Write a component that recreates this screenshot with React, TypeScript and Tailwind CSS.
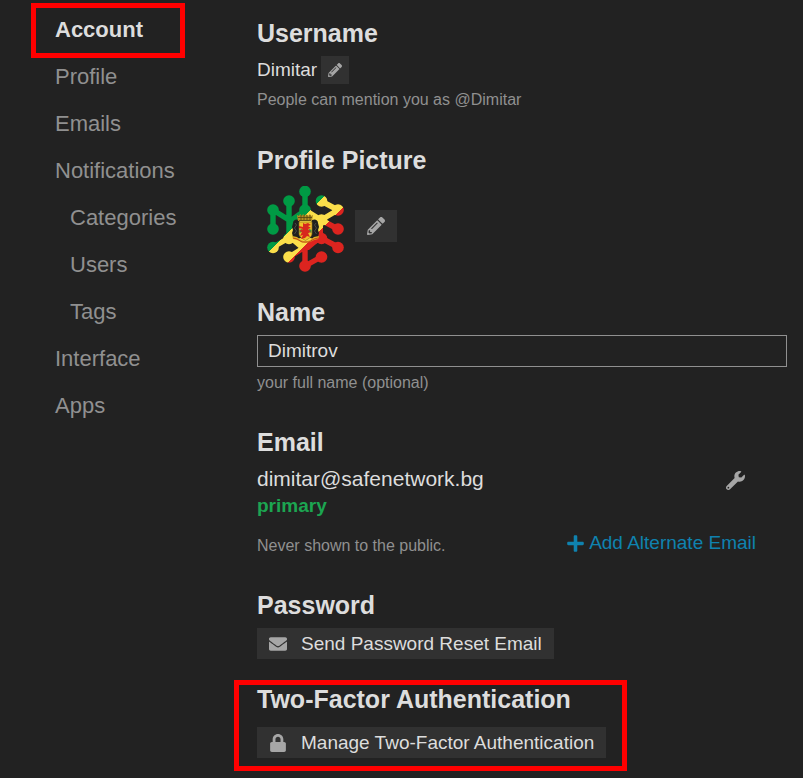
import { useState, type ReactNode } from "react";
import { FaEnvelope, FaLock, FaPencilAlt, FaPlus, FaWrench } from "react-icons/fa";

const NAV = [
  { label: "Account", active: true },
  { label: "Profile" },
  { label: "Emails" },
  { label: "Notifications" },
  { label: "Categories", nested: true },
  { label: "Users", nested: true },
  { label: "Tags", nested: true },
  { label: "Interface" },
  { label: "Apps" },
];

// circuit nodes and the traces between them
const NODES = [
  [38, 5.5], [22, 15], [6, 24], [6, 43], [6, 61.5], [38, 24], [54.5, 15], [71, 24], [54.5, 34],
  [71, 43], [54.5, 52.5], [71, 61.5], [54.5, 71], [38, 80], [22, 71], [22, 52.5],
];
const TRACES =
  "M38 6V24L54 34L71 43M22 15V52L6 61M6 43V24L22 34M54 15L71 24L54 34M38 80V61L54 52L71 61M38 80L54 71M22 71L38 61M22 52L38 43M38 24V43";

function Avatar() {
  return (
    <svg viewBox="0 0 77 86" className="h-[86px] w-[77px]" role="img" aria-label="Profile picture">
      <defs>
        <linearGradient id="flag" gradientUnits="userSpaceOnUse" x1="0" y1="0" x2="100" y2="100">
          <stop offset=".34" stopColor="#009a44" />
          <stop offset=".34" stopColor="#fbde4a" />
          <stop offset=".49" stopColor="#fbde4a" />
          <stop offset=".49" stopColor="#dc241f" />
        </linearGradient>
      </defs>
      <path d={TRACES} fill="none" stroke="url(#flag)" strokeWidth="5.4" strokeLinejoin="round" />
      <g fill="url(#flag)">
        {NODES.map(([x, y]) => (
          <circle key={`${x}-${y}`} cx={x} cy={y} r="5.8" />
        ))}
        <path d="M20 34L34 24H42L56 34V52L42 64H34L20 52Z" />
      </g>
      {/* supporters */}
      <path d="M32 34c-3-1.500-6 0-6 3l-1 4 1 3-1 3 1 4 3 2 5-1 1-8z" fill="#20201e" />
      <path d="M45 34c3-1.500 6 0 6 3l1 4-1 3 1 3-1 4-3 2-5-1-1-8z" fill="#20201e" />
      <path d="M28 37l1.500 2-2 3 2 3-2 3M49 37l-1.500 2 2 3-2 3 2 3" fill="none" stroke="#5d5a55" strokeWidth=".7" />
      {/* shield with lion */}
      <path d="M32 36h13v11c0 4-3 5.500-6.500 7.500-3.500-2-6.500-3.500-6.500-7.500z" fill="#efc22b" stroke="#8c6815" strokeWidth=".6" />
      <path d="M32.500 44l2-1 2 2 2-2 2 2 2-2 2 1v3l-2-1-2 2-2-2-2 2-2-2-2 1z" fill="#3b9d41" />
      <path d="M36 37l2 1 3-1 3 2-3 1 3 2-3 1 3 3-3 1 2 4-3-1-2 2-4 1 2-4-3 1 2-4-3-1 4-2-4-1v-2l4 1z" fill="#d7271d" />
      {/* crown */}
      <path d="M30 29l2 1 1-2 2 2 1-2 2 2 1-2 2 2 2-2 1 2 2-1-1 6H31z" fill="#b58f22" />
      <path d="M31 31.500h14M32 34.500h12M34 29v5M37 29v5M40 29v5M43 29v5" stroke="#544413" strokeWidth=".8" />
      {/* motto ribbon */}
      <path d="M25 50l5 1 3 2.500 5.500 2 5.500-2 3-2.500 5-1-1 3-4 1-4 2-4.500 1-4.500-1-4-2-4-1z" fill="#dfb323" />
      <path d="M26 52l4 1 5 3h7l5-3 4-1" fill="none" stroke="#b92b18" strokeWidth=".8" />
    </svg>
  );
}

function Section({ title, className = "", children }: { title: string; className?: string; children: ReactNode }) {
  return (
    <section className={className}>
      <h2 className="text-[25px] leading-8 font-bold">{title}</h2>
      {children}
    </section>
  );
}

function ActionButton({ icon, children }: { icon: ReactNode; children: ReactNode }) {
  return (
    <button type="button" className="flex h-[31px] items-center gap-3.5 bg-[#313131] px-3 text-[19px] leading-6">
      <span className="text-lg text-[#a6a6a6]">{icon}</span>
      {children}
    </button>
  );
}

export default function App() {
  const [name, setName] = useState("Dimitrov");

  return (
    <div className="flex min-h-screen bg-[#222222] font-['Liberation_Sans',Arial,sans-serif] text-[#dddddd]">
      <nav className="w-[257px] shrink-0 pt-[6px] pl-[55px]">
        <ul>
          {NAV.map(({ label, active, nested }) => (
            <li key={label} className={nested ? "pl-[15px]" : ""}>
              <a
                href="#"
                className={
                  "relative block h-[47px] text-[22px] leading-[47px] " +
                  (active ? "font-bold" : "text-[#909090]")
                }
              >
                {label}
                {active && (
                  <span className="absolute -top-[3px] -left-6 h-[55px] w-[154px] border-5 border-[#ff0000]" />
                )}
              </a>
            </li>
          ))}
        </ul>
      </nav>

      <main className="min-w-0 flex-1 pt-[17px] pr-4 pb-5">
        <Section title="Username">
          <div className="mt-[7px] flex items-center gap-1 text-[19px] leading-7">
            <span>Dimitar</span>
            <button type="button" aria-label="Edit username" className="grid size-7 place-items-center bg-[#313131] text-sm text-[#a6a6a6]">
              <FaPencilAlt />
            </button>
          </div>
          <p className="mt-[6px] text-base leading-5 text-[#909090]">People can mention you as @Dimitar</p>
        </Section>

        <Section title="Profile Picture" className="mt-[34px]">
          <div className="mt-[10px] flex items-center gap-[11px] pl-[10px]">
            <Avatar />
            <button type="button" aria-label="Edit profile picture" className="mb-1.5 grid h-8 w-[42px] place-items-center bg-[#313131] text-lg text-[#a6a6a6]">
              <FaPencilAlt />
            </button>
          </div>
        </Section>

        <Section title="Name" className="mt-6">
          <input
            aria-label="Name"
            aria-describedby="name-hint"
            value={name}
            onChange={(e) => setName(e.target.value)}
            className="mt-[7px] block h-8 w-full border border-[#909090] bg-[#222222] px-[10px] text-[19px] outline-none"
          />
          <p id="name-hint" className="mt-[6px] text-base leading-5 text-[#909090]">your full name (optional)</p>
        </Section>

        <Section title="Email" className="mt-[33px]">
          <div className="mt-2 flex items-start justify-between pr-[42px]">
            <div>
              <p className="text-[21px] leading-[26px]">dimitar@safenetwork.bg</p>
              <p className="text-[19px] leading-7 font-bold text-[#1ca551]">primary</p>
            </div>
            <button type="button" aria-label="Email options" className="mt-[5px] text-[19px] text-[#a6a6a6]">
              <FaWrench />
            </button>
          </div>
          <div className="mt-[10px] flex items-center justify-between pr-[31px]">
            <p className="pt-1.5 text-base leading-5 text-[#909090]">Never shown to the public.</p>
            <a href="#" className="flex items-center gap-1 text-[19px] leading-6 text-[#0f82af]">
              <FaPlus />
              Add Alternate Email
            </a>
          </div>
        </Section>

        <Section title="Password" className="mt-[33px]">
          <div className="mt-[7px] flex">
            <ActionButton icon={<FaEnvelope />}>Send Password Reset Email</ActionButton>
          </div>
        </Section>

        <div className="relative mt-6">
          <Section title="Two-Factor Authentication">
            <div className="mt-3 flex">
              <ActionButton icon={<FaLock />}>Manage Two-Factor Authentication</ActionButton>
            </div>
          </Section>
          <div className="pointer-events-none absolute -top-[3px] -left-[23px] h-[91px] w-[393px] border-5 border-[#ff0000]" />
        </div>
      </main>
    </div>
  );
}
